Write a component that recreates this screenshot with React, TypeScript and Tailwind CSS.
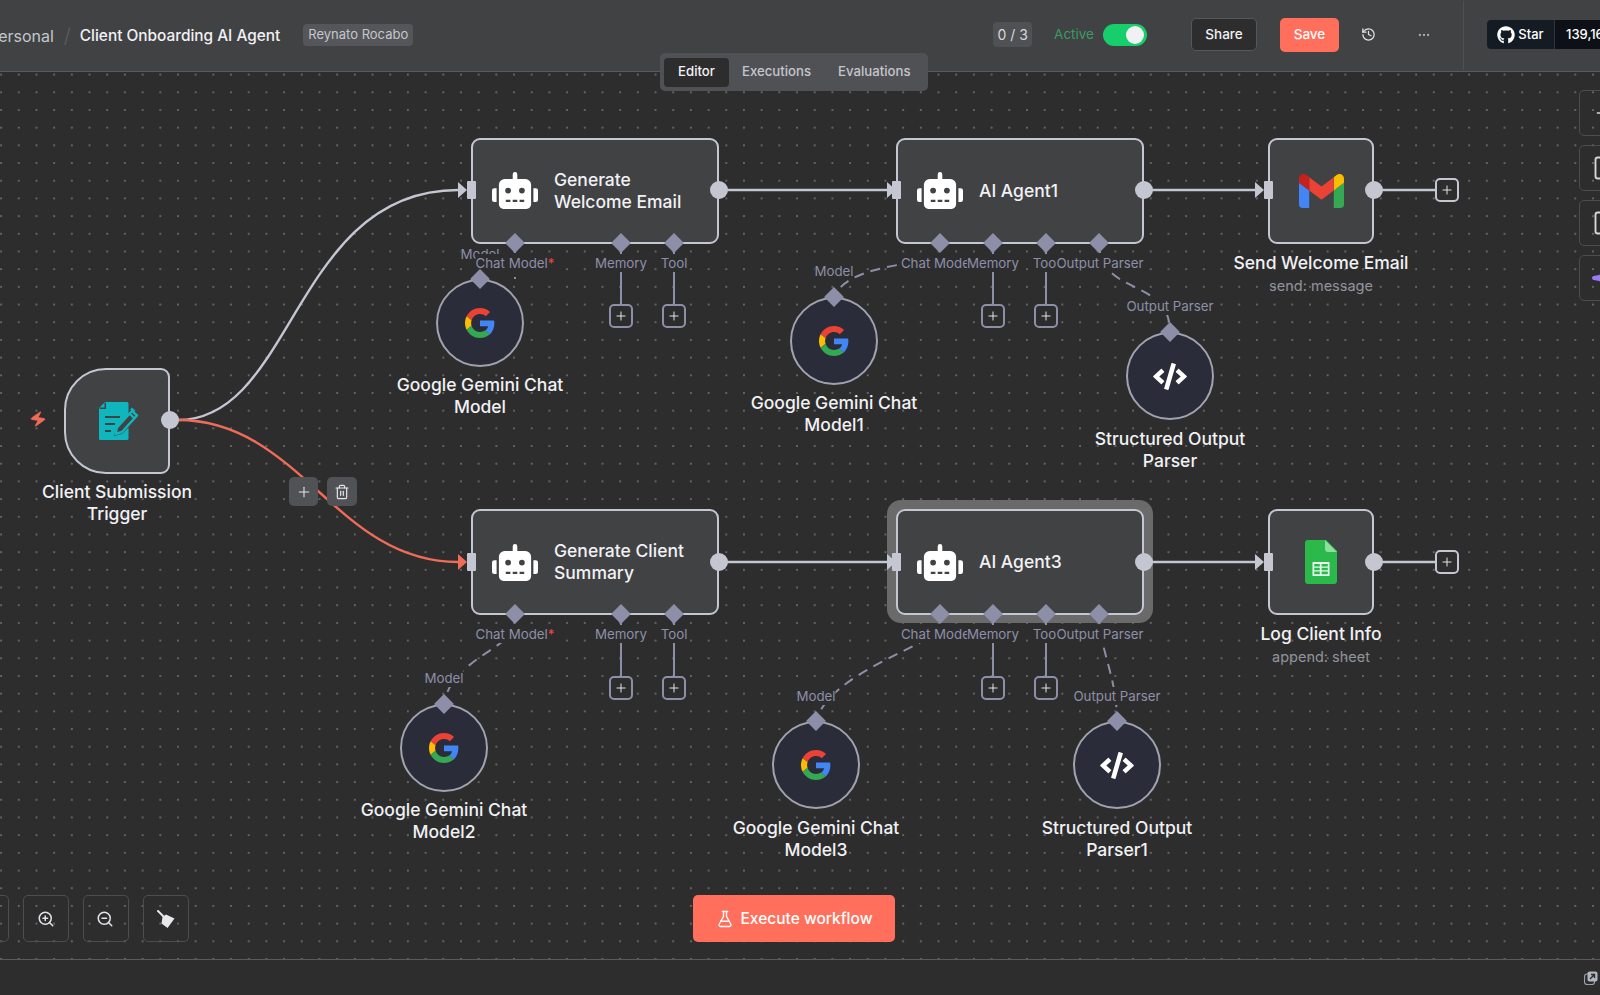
import { FlaskConical, History, Plus, Trash2, ZoomIn, ZoomOut, Sparkle, Square, Zap, Ellipsis } from "lucide-react";
import { FaCode, FaGithub, FaRobot } from "react-icons/fa";

// canvas coordinates: page y minus 72
const GoogleG = () => (
  <svg viewBox="0 0 48 48" className="w-[30px] h-[30px]">
    <path fill="#EA4335" d="M24 9.5c3.54 0 6.71 1.22 9.21 3.6l6.85-6.85C35.9 2.38 30.47 0 24 0 14.62 0 6.51 5.38 2.56 13.22l7.98 6.19C12.43 13.72 17.74 9.5 24 9.5z" />
    <path fill="#4285F4" d="M46.98 24.55c0-1.57-.15-3.09-.38-4.55H24v9.02h12.94c-.58 2.96-2.26 5.48-4.78 7.18l7.73 6c4.51-4.18 7.09-10.36 7.09-17.65z" />
    <path fill="#FBBC05" d="M10.53 28.59c-.48-1.45-.76-2.99-.76-4.59s.27-3.14.76-4.59l-7.98-6.19C.92 16.46 0 20.12 0 24c0 3.88.92 7.54 2.56 10.78l7.97-6.19z" />
    <path fill="#34A853" d="M24 48c6.48 0 11.93-2.13 15.89-5.81l-7.73-6c-2.15 1.45-4.92 2.3-8.16 2.3-6.26 0-11.57-4.22-13.47-9.91l-7.98 6.19C6.51 42.62 14.62 48 24 48z" />
  </svg>
);

const GmailIcon = () => (
  <svg viewBox="52 42 88 66" className="w-[45px] h-[34px]">
    <path fill="#4285f4" d="M58 108h14V74L52 59v43c0 3.32 2.69 6 6 6" />
    <path fill="#34a853" d="M120 108h14c3.32 0 6-2.69 6-6V59l-20 15" />
    <path fill="#fbbc04" d="M120 48v26l20-15v-8c0-7.42-8.47-11.65-14.4-7.2" />
    <path fill="#ea4335" d="M72 74V48l24 18 24-18v26L96 92" />
    <path fill="#c5221f" d="M52 51v8l20 15V48l-5.6-4.2c-5.94-4.45-14.4-.22-14.4 7.2" />
  </svg>
);

const SheetsIcon = () => (
  <svg viewBox="0 0 32 44" className="w-[32px] h-[44px]">
    <path fill="#2bb94c" d="M3 0h18l11 11v30a3 3 0 0 1-3 3H3a3 3 0 0 1-3-3V3a3 3 0 0 1 3-3z" />
    <path fill="#8ddf9e" d="M20 0l12 12H23a3 3 0 0 1-3-3z" />
    <path fill="#e8f8ec" d="M8 22h16a0.5 0.5 0 0 1 .5.5v13a.5.5 0 0 1-.5.5H8a.5.5 0 0 1-.5-.5v-13A.5.5 0 0 1 8 22zm1.2 2v2.4h5.6V24zm7.4 0v2.4h6.2V24zM9.2 27.8v2.4h5.6v-2.4zm7.4 0v2.4h6.2v-2.4zM9.2 31.6v2.6h5.6v-2.6zm7.4 0v2.6h6.2v-2.6z" fillRule="evenodd" />
  </svg>
);

const FormIcon = () => (
  <svg viewBox="0 0 40 38" className="w-[40px] h-[38px] ml-[3px]">
    <path fill="#10b6bd" d="M6 0h22a1.5 1.5 0 0 1 1.5 1.5V13L17 26l-2 8 8-2 6.5-6.5V36.5A1.5 1.5 0 0 1 28 38H1.5A1.5 1.5 0 0 1 0 36.5V6z" />
    <path fill="#414244" d="M5.5 0.2V5.5H0.2L1 7h6V1z" />
    <path stroke="#414244" strokeWidth="2" d="M6 15h15M6 22h10M6 29h6" />
    <path fill="none" stroke="#10b6bd" strokeWidth="2.4" strokeLinejoin="round" d="M33 9l5 4.5-15 16.5-6.5 2 1.5-6.5zM30.5 11.5l5 5M32 6.5l3.5 3" />
  </svg>
);

const BroomIcon = () => (
  <svg viewBox="0 0 18 18" className="w-[18px] h-[18px]">
    <path d="M1 1l6 6" stroke="#e8e8ec" strokeWidth="2" strokeLinecap="round" />
    <path fill="#e8e8ec" d="M5.5 7L9 4.5l8.5 4L10.5 18l-6-4.5z" />
  </svg>
);

const AddButton = ({ className, light }: { className: string; light?: boolean }) => (
  <div
    className={`absolute w-6 h-6 rounded-[5px] border-2 flex items-center justify-center bg-[#2d2d2e] ${
      light ? "border-[#c4c6d1]" : "border-[#8d8fa8]"
    } ${className}`}
  >
    <Plus size={14} strokeWidth={1.6} className="text-[#f1f1f4]" />
  </div>
);

const Diamond = ({ className }: { className: string }) => (
  <div className={`absolute w-[14px] h-[14px] rotate-45 bg-[#8d8fa8] ${className}`} />
);

const PortLabel = ({ className, children }: { className: string; children: React.ReactNode }) => (
  <div className={`absolute -translate-x-1/2 text-[13.3px] leading-[18px] whitespace-nowrap text-[#8d8fa8] bg-[#2d2d2e] ${className}`}>
    {children}
  </div>
);

const NodeInput = ({ className }: { className: string }) => (
  <div className={`absolute w-[9px] h-[18px] rounded-[1px] bg-[#c4c6d1] ${className}`} />
);

const NodeOutput = ({ className }: { className: string }) => (
  <div className={`absolute w-[18px] h-[18px] rounded-full bg-[#c4c6d1] ${className}`} />
);

const AgentNode = ({ className, title }: { className: string; title: React.ReactNode }) => (
  <div className={`absolute w-[248px] h-[106px] rounded-[9px] border-2 border-[#c4c6d1] bg-[#414244] flex items-center pl-[19px] ${className}`}>
    <FaRobot className="w-[46px] h-[37px] text-white shrink-0" />
    <div className="ml-[16px] text-[17.5px] leading-[22px] font-medium text-[#f1f1f4]">{title}</div>
  </div>
);

const SquareNode = ({ className, children }: { className: string; children: React.ReactNode }) => (
  <div className={`absolute w-[106px] h-[106px] rounded-[9px] border-2 border-[#c4c6d1] bg-[#414244] flex items-center justify-center ${className}`}>
    {children}
  </div>
);

const SubNode = ({ className, children }: { className: string; children: React.ReactNode }) => (
  <div className={`absolute w-[88px] h-[88px] rounded-full border-2 border-[#a0a2ad] bg-[#2a2c3a] flex items-center justify-center ${className}`}>
    {children}
  </div>
);

const NodeLabel = ({ className, children }: { className: string; children: React.ReactNode }) => (
  <div className={`absolute -translate-x-1/2 text-center text-[17.5px] leading-[22px] font-medium whitespace-nowrap text-[#f1f1f4] ${className}`}>
    {children}
  </div>
);

const SubLabel = ({ className, children }: { className: string; children: React.ReactNode }) => (
  <div className={`absolute -translate-x-1/2 text-center text-[14.5px] leading-[20px] whitespace-nowrap text-[#92949c] ${className}`}>
    {children}
  </div>
);

const Connections = () => (
  <svg className="absolute inset-0 w-full h-full" fill="none">
    {/* main flow */}
    <g stroke="#c4c6d1" strokeWidth="2.4">
      <path d="M178 348 C294 348 294 118 458 118" />
      <path d="M727 118H887M1152 118H1255M1382 118H1435" />
      <path d="M727 490H887M1152 490H1255M1382 490H1435" />
    </g>
    <path d="M178 348 C300 348 336 490 458 490" stroke="#ef6c59" strokeWidth="2.4" />
    <g fill="#c4c6d1">
      <path d="M458 110l9 8-9 8zM887 110l9 8-9 8zM1255 110l9 8-9 8zM887 482l9 8-9 8zM1255 482l9 8-9 8z" />
    </g>
    <path d="M458 482l9 8-9 8z" fill="#ef6c59" />
    {/* ai ports */}
    <g stroke="#8d8fa8" strokeWidth="2">
      <path d="M621 171V232M674 171V232M993 171V232M1046 171V232M621 542V604M674 542V604M993 542V604M1046 542V604" />
      <path strokeDasharray="10 7" d="M515 171V207" />
      <path strokeDasharray="10 7" d="M930 186 C900 195 850 195 834 224" />
      <path strokeDasharray="10 7" d="M1099 171 C1100 225 1170 205 1170 260" />
      <path strokeDasharray="10 7" d="M515 555 C510 575 450 590 444 632" />
      <path strokeDasharray="10 7" d="M940 555 C930 575 830 600 816 649" />
      <path strokeDasharray="10 7" d="M1099 542 C1100 580 1117 605 1117 649" />
    </g>
    <g fill="#8d8fa8">
      <path d="M511 187l4-5 4 5zM936 187l4-5 4 5zM1095 187l4-5 4 5zM511 558l4-5 4 5zM936 558l4-5 4 5zM1095 558l4-5 4 5z" />
    </g>
  </svg>
);

const Canvas = () => (
  <div className="relative flex-1 overflow-hidden bg-[#2d2d2e] bg-[radial-gradient(circle,#626365_0.7px,transparent_1px)] bg-[size:17.7px_17.7px] bg-[position:-7.75px_-6.25px]">
    {/* selected halo */}
    <div className="absolute left-[887px] top-[428px] w-[266px] h-[123px] rounded-[14px] bg-[#6a6a6b]" />

    <Connections />

    {/* trigger */}
    <Zap className="absolute left-[29px] top-[338px] w-[18px] h-[18px] text-[#ef6c59] fill-[#ef6c59] rotate-[10deg]" strokeWidth={1} />
    <div className="absolute left-[64px] top-[295.5px] w-[106px] h-[106px] rounded-l-[42px] rounded-r-[9px] border-2 border-[#c4c6d1] bg-[#414244] flex items-center justify-center">
      <FormIcon />
    </div>
    <NodeOutput className="left-[161px] top-[339px]" />
    <NodeLabel className="left-[117px] top-[409px]">
      Client Submission
      <br />
      Trigger
    </NodeLabel>

    {/* hover actions on the red edge */}
    <div className="absolute left-[289px] top-[405px] w-[29px] h-[29px] rounded-[5px] bg-[#515255] flex items-center justify-center">
      <Plus size={16} className="text-[#e4e4e8]" strokeWidth={1.6} />
    </div>
    <div className="absolute left-[327px] top-[405px] w-[30px] h-[29px] rounded-[5px] bg-[#515255] flex items-center justify-center">
      <Trash2 size={16} className="text-[#e4e4e8]" strokeWidth={1.8} />
    </div>

    {/* top row */}
    <AgentNode className="left-[471px] top-[65.5px]" title={<>Generate<br />Welcome Email</>} />
    <AgentNode className="left-[896px] top-[65.5px]" title="AI Agent1" />
    <SquareNode className="left-[1268px] top-[65.5px]">
      <GmailIcon />
    </SquareNode>
    <NodeLabel className="left-[1321px] top-[180px]">Send Welcome Email</NodeLabel>
    <SubLabel className="left-[1321px] top-[204px]">send: message</SubLabel>

    {/* bottom row */}
    <AgentNode className="left-[471px] top-[437px]" title={<>Generate Client<br />Summary</>} />
    <AgentNode className="left-[896px] top-[437px]" title="AI Agent3" />
    <SquareNode className="left-[1268px] top-[437px]">
      <SheetsIcon />
    </SquareNode>
    <NodeLabel className="left-[1321px] top-[551px]">Log Client Info</NodeLabel>
    <SubLabel className="left-[1321px] top-[575px]">append: sheet</SubLabel>

    {/* node handles */}
    <NodeInput className="left-[467px] top-[109px]" />
    <NodeInput className="left-[892px] top-[109px]" />
    <NodeInput className="left-[1264px] top-[109px]" />
    <NodeInput className="left-[467px] top-[481px]" />
    <NodeInput className="left-[892px] top-[481px]" />
    <NodeInput className="left-[1264px] top-[481px]" />
    <NodeOutput className="left-[710px] top-[109px]" />
    <NodeOutput className="left-[1135px] top-[109px]" />
    <NodeOutput className="left-[1365px] top-[109px]" />
    <NodeOutput className="left-[710px] top-[481px]" />
    <NodeOutput className="left-[1135px] top-[481px]" />
    <NodeOutput className="left-[1365px] top-[481px]" />
    <AddButton light className="left-[1435px] top-[106px]" />
    <AddButton light className="left-[1435px] top-[478px]" />

    {/* port labels */}
    <PortLabel className="left-[480px] top-[173px]">Model</PortLabel>
    <PortLabel className="left-[515px] top-[182px]">
      Chat Model<span className="text-[#ef4444]">*</span>
    </PortLabel>
    <PortLabel className="left-[621px] top-[182px]">Memory</PortLabel>
    <PortLabel className="left-[674px] top-[182px]">Tool</PortLabel>

    <PortLabel className="left-[937px] top-[182px]">Chat Model</PortLabel>
    <PortLabel className="left-[993px] top-[182px]">Memory</PortLabel>
    <PortLabel className="left-[1046px] top-[182px]">Tool</PortLabel>
    <PortLabel className="left-[1100px] top-[182px]">Output Parser</PortLabel>
    <PortLabel className="left-[834px] top-[190px]">Model</PortLabel>
    <PortLabel className="left-[1170px] top-[225px]">Output Parser</PortLabel>

    <PortLabel className="left-[515px] top-[553px]">
      Chat Model<span className="text-[#ef4444]">*</span>
    </PortLabel>
    <PortLabel className="left-[621px] top-[553px]">Memory</PortLabel>
    <PortLabel className="left-[674px] top-[553px]">Tool</PortLabel>
    <PortLabel className="left-[444px] top-[597px]">Model</PortLabel>

    <PortLabel className="left-[937px] top-[553px]">Chat Model</PortLabel>
    <PortLabel className="left-[993px] top-[553px]">Memory</PortLabel>
    <PortLabel className="left-[1046px] top-[553px]">Tool</PortLabel>
    <PortLabel className="left-[1100px] top-[553px]">Output Parser</PortLabel>
    <PortLabel className="left-[816px] top-[615px]">Model</PortLabel>
    <PortLabel className="left-[1117px] top-[615px]">Output Parser</PortLabel>

    {/* port diamonds on the agents */}
    <Diamond className="left-[508px] top-[164px]" />
    <Diamond className="left-[614px] top-[164px]" />
    <Diamond className="left-[667px] top-[164px]" />
    <Diamond className="left-[933px] top-[164px]" />
    <Diamond className="left-[986px] top-[164px]" />
    <Diamond className="left-[1039px] top-[164px]" />
    <Diamond className="left-[1092px] top-[164px]" />
    <Diamond className="left-[508px] top-[535px]" />
    <Diamond className="left-[614px] top-[535px]" />
    <Diamond className="left-[667px] top-[535px]" />
    <Diamond className="left-[933px] top-[535px]" />
    <Diamond className="left-[986px] top-[535px]" />
    <Diamond className="left-[1039px] top-[535px]" />
    <Diamond className="left-[1092px] top-[535px]" />

    <AddButton className="left-[609px] top-[232px]" />
    <AddButton className="left-[662px] top-[232px]" />
    <AddButton className="left-[981px] top-[232px]" />
    <AddButton className="left-[1034px] top-[232px]" />
    <AddButton className="left-[609px] top-[604px]" />
    <AddButton className="left-[662px] top-[604px]" />
    <AddButton className="left-[981px] top-[604px]" />
    <AddButton className="left-[1034px] top-[604px]" />

    {/* sub nodes */}
    <SubNode className="left-[436px] top-[207px]"><GoogleG /></SubNode>
    <Diamond className="left-[473px] top-[200px]" />
    <NodeLabel className="left-[480px] top-[302px]">Google Gemini Chat<br />Model</NodeLabel>

    <SubNode className="left-[790px] top-[225px]"><GoogleG /></SubNode>
    <Diamond className="left-[827px] top-[218px]" />
    <NodeLabel className="left-[834px] top-[320px]">Google Gemini Chat<br />Model1</NodeLabel>

    <SubNode className="left-[1126px] top-[260px]"><FaCode className="w-[34px] h-[27px] text-white" /></SubNode>
    <Diamond className="left-[1163px] top-[253px]" />
    <NodeLabel className="left-[1170px] top-[355.5px]">Structured Output<br />Parser</NodeLabel>

    <SubNode className="left-[400px] top-[632px]"><GoogleG /></SubNode>
    <Diamond className="left-[437px] top-[625px]" />
    <NodeLabel className="left-[444px] top-[727px]">Google Gemini Chat<br />Model2</NodeLabel>

    <SubNode className="left-[772px] top-[649px]"><GoogleG /></SubNode>
    <Diamond className="left-[809px] top-[642px]" />
    <NodeLabel className="left-[816px] top-[744.5px]">Google Gemini Chat<br />Model3</NodeLabel>

    <SubNode className="left-[1073px] top-[649px]"><FaCode className="w-[34px] h-[27px] text-white" /></SubNode>
    <Diamond className="left-[1110px] top-[642px]" />
    <NodeLabel className="left-[1117px] top-[744.5px]">Structured Output<br />Parser1</NodeLabel>

    {/* right side tools, cut off by the window */}
    <div className="absolute left-[1579px] top-[18px] flex flex-col gap-[9px]">
      <div className="w-[46px] h-[46px] rounded-[5px] border border-[#4c4d4f] flex items-center pl-[14px]">
        <Plus size={16} className="text-[#d8d8dc] shrink-0" />
      </div>
      <div className="w-[46px] h-[46px] rounded-[5px] border border-[#4c4d4f] flex items-center pl-[12px]">
        <Square size={28} strokeWidth={1.6} className="text-[#d8d8dc] shrink-0" />
      </div>
      <div className="w-[46px] h-[46px] rounded-[5px] border border-[#4c4d4f] flex items-center pl-[12px]">
        <Square size={28} strokeWidth={1.6} className="text-[#d8d8dc] shrink-0" />
      </div>
      <div className="w-[46px] h-[46px] rounded-[5px] border border-[#4c4d4f] flex items-center pl-[11px]">
        <Sparkle size={24} className="text-[#9b7cf5] fill-[#9b7cf5] shrink-0" />
      </div>
    </div>

    {/* bottom controls */}
    <div className="absolute left-[-36px] top-[823px] flex gap-[14px]">
      <div className="w-[45px] h-[47px] rounded-[5px] border border-[#4c4d4f]" />
      <div className="w-[46px] h-[47px] rounded-[5px] border border-[#4c4d4f] flex items-center justify-center">
        <ZoomIn size={18} className="text-[#e4e4e8]" />
      </div>
      <div className="w-[46px] h-[47px] rounded-[5px] border border-[#4c4d4f] flex items-center justify-center pr-[2px]">
        <ZoomOut size={18} className="text-[#e4e4e8]" />
      </div>
      <div className="w-[46px] h-[47px] rounded-[5px] border border-[#4c4d4f] flex items-center justify-center">
        <BroomIcon />
      </div>
    </div>
    <div className="absolute left-[693px] top-[823px] w-[202px] h-[47px] rounded-[5px] bg-[#ff6f5c] flex items-center justify-center gap-[7px] text-white text-[15.5px] font-medium">
      <FlaskConical size={18} strokeWidth={1.8} />
      Execute workflow
    </div>
  </div>
);

const Header = () => (
  <header className="h-[72px] shrink-0 border-b border-[#5a5b5d] bg-[#414244] flex items-center pb-[2px] text-[15px]">
    <div className="flex items-center ml-[-12px] mt-[3px]">
      <span className="text-[16px] text-[#c4c6cc]">Personal</span>
      <span className="ml-[10px] mr-[9px] text-[#5c5d60] text-[20px] font-light">/</span>
      <span className="text-[15.4px] font-medium text-[#f1f1f4]">Client Onboarding AI Agent</span>
      <span className="ml-[23px] -mt-[2px] px-[5px] h-[22px] flex items-center rounded-[4px] bg-[#55565a] text-[13px] text-[#c4c6cc]">Reynato Rocabo</span>
    </div>
    <div className="ml-auto flex items-center h-full">
      <div className="w-[39px] h-[25px] rounded-[4px] bg-[#505154] flex items-center justify-center text-[14px] text-[#d8d8dc]">0 / 3</div>
      <span className="ml-[22px] text-[13.5px] text-[#3c9a63]">Active</span>
      <div className="ml-[9px] w-[44px] h-[22px] rounded-full bg-[#17ce6c] flex items-center justify-end pr-[3px]">
        <div className="w-[18px] h-[18px] rounded-full bg-[#f1f1f4]" />
      </div>
      <div className="ml-[44px] w-[66px] h-[33px] rounded-[5px] border border-[#565759] bg-[#2d2d2e] flex items-center justify-center text-[13.5px] font-medium text-[#f1f1f4]">Share</div>
      <div className="ml-[23px] w-[59px] h-[34px] rounded-[5px] bg-[#ff6f5c] flex items-center justify-center text-[13.5px] font-medium text-white">Save</div>
      <History size={15} className="ml-[22px] text-[#e4e4e8]" />
      <Ellipsis size={14} className="ml-[41px] text-[#a9abb1]" />
      <div className="ml-[32px] h-full -mb-[2px] border-l border-[#4f5052] flex items-center pl-[23px] w-[137px] shrink-0 overflow-hidden">
        <div className="flex items-center h-[29px] mb-[2px] shrink-0 rounded-l-[4px] overflow-hidden text-[13px] font-medium text-white">
          <div className="w-[67px] h-full bg-[#151b23] flex items-center justify-center gap-[3px]">
            <FaGithub size={18} /> Star
          </div>
          <div className="w-[70px] h-full pl-[11px] bg-[#0d1117] border-l border-[#30363d] flex items-center">139,165</div>
        </div>
      </div>
    </div>
  </header>
);

export default function App() {
  return (
    <div className="relative w-[1600px] h-[995px] overflow-hidden flex flex-col bg-[#2d2d2e] font-['Inter',sans-serif]">
      <Header />
      <Canvas />
      <footer className="h-[36px] shrink-0 border-t border-[#5a5b5d] bg-[#2d2d2e] flex items-center justify-end pr-[2px]">
        <svg viewBox="0 0 14 14" className="w-[14px] h-[14px]">
          <rect x="0.5" y="3" width="10" height="10.5" rx="2.5" fill="none" stroke="#9c9ea8" strokeWidth="1.2" />
          <rect x="3.5" y="0.5" width="10" height="10" rx="2" fill="#b4b6c0" />
          <path d="M6 8l4.5-4.5M7 3.5h3.5V7" stroke="#2d2d2e" strokeWidth="1.4" fill="none" />
        </svg>
      </footer>

      {/* view tabs sit over the header edge */}
      <div className="absolute left-[660px] top-[53px] w-[268px] h-[38px] rounded-[5px] bg-[#505154] flex items-center gap-[4px] px-[4px] text-[13.2px] font-medium text-[#c4c6cc]">
        <div className="w-[65px] h-[29px] rounded-[4px] bg-[#2d2d2e] flex items-center justify-center text-[#f1f1f4]">Editor</div>
        <div className="w-[85px] text-center ml-[1px]">Executions</div>
        <div className="ml-[15px]">Evaluations</div>
      </div>
    </div>
  );
}
